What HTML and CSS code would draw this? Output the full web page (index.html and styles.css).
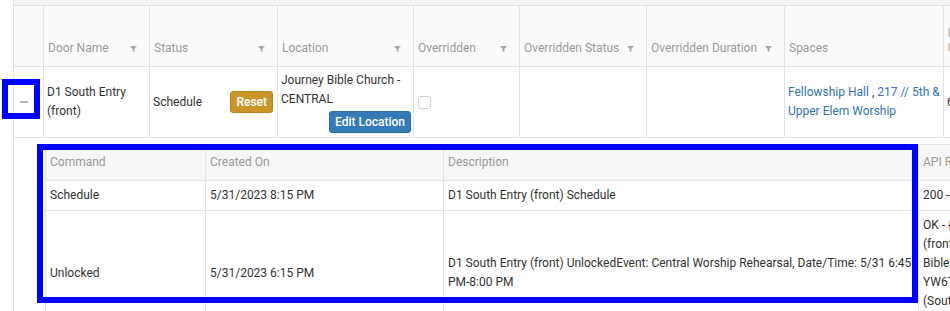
FILE: index.html
```html
<!DOCTYPE html>
<html lang="en">
<head>
  <meta charset="UTF-8">
  <meta name="viewport" content="width=device-width, initial-scale=1.0">
  <title>Doors</title>
  <link rel="stylesheet" href="styles.css">
</head>
<body>
<div class="page">
  <div class="grid">
    <div class="grid-top"></div>
    <table class="main">
      <colgroup>
        <col style="width:30px">
        <col style="width:106px">
        <col style="width:128px">
        <col style="width:136px">
        <col style="width:106px">
        <col style="width:127px">
        <col style="width:138px">
        <col style="width:159px">
        <col style="width:70px">
      </colgroup>
      <thead>
        <tr>
          <th class="hier"></th>
          <th><div class="th-in"><span>Door Name</span><svg class="filter" viewBox="0 0 8 8"><path d="M0 1h8L5 4.5V8L3 7V4.5z"/></svg></div></th>
          <th><div class="th-in"><span>Status</span><svg class="filter" viewBox="0 0 8 8"><path d="M0 1h8L5 4.5V8L3 7V4.5z"/></svg></div></th>
          <th><div class="th-in"><span>Location</span><svg class="filter" viewBox="0 0 8 8"><path d="M0 1h8L5 4.5V8L3 7V4.5z"/></svg></div></th>
          <th><div class="th-in"><span>Overridden</span><svg class="filter" viewBox="0 0 8 8"><path d="M0 1h8L5 4.5V8L3 7V4.5z"/></svg></div></th>
          <th><div class="th-in"><span>Overridden Status</span><svg class="filter" viewBox="0 0 8 8"><path d="M0 1h8L5 4.5V8L3 7V4.5z"/></svg></div></th>
          <th><div class="th-in"><span>Overridden Duration</span><svg class="filter" viewBox="0 0 8 8"><path d="M0 1h8L5 4.5V8L3 7V4.5z"/></svg></div></th>
          <th><div class="th-in"><span>Spaces</span></div></th>
          <th class="th-last"><div class="th-in"><span>Expires Until</span></div></th>
        </tr>
      </thead>
      <tbody>
        <tr class="master">
          <td class="hier"><span class="collapse"></span></td>
          <td>D1 South Entry (front)</td>
          <td>
            <div class="status">
              <span>Schedule</span>
              <a href="#" class="btn btn-reset">Reset</a>
            </div>
          </td>
          <td>
            Journey Bible Church - CENTRAL
            <div class="loc-actions"><a href="#" class="btn btn-edit">Edit Location</a></div>
          </td>
          <td><span class="check"></span></td>
          <td></td>
          <td></td>
          <td><a href="#" class="link">Fellowship Hall</a> , <a href="#" class="link">217 // 5th &amp; Upper Elem Worship</a></td>
          <td class="nowrap">6/1/2023</td>
        </tr>
        <tr class="detail">
          <td class="hier"></td>
          <td class="detail-cell" colspan="8">
            <table class="sub">
              <colgroup>
                <col style="width:160px">
                <col style="width:238px">
                <col style="width:475px">
                <col style="width:120px">
              </colgroup>
              <thead>
                <tr>
                  <th>Command</th>
                  <th>Created On</th>
                  <th>Description</th>
                  <th>API Response</th>
                </tr>
              </thead>
              <tbody>
                <tr>
                  <td>Schedule</td>
                  <td>5/31/2023 8:15 PM</td>
                  <td>D1 South Entry (front) Schedule</td>
                  <td class="api">200 - OK</td>
                </tr>
                <tr>
                  <td>Unlocked</td>
                  <td>5/31/2023 6:15 PM</td>
                  <td>D1 South Entry (front) UnlockedEvent: Central Worship Rehearsal, Date/Time: 5/31 6:45 PM-8:00 PM</td>
                  <td class="api">OK - {"door":<br>(front)",<br>Bible",<br>YW6TQ2",<br>(South)",<br>"ok"}</td>
                </tr>
              </tbody>
            </table>
          </td>
        </tr>
      </tbody>
    </table>
  </div>

  <div class="mark mark-expand"></div>
  <div class="mark mark-detail"></div>
</div>
</body>
</html>
```

FILE: styles.css
```css
body {
  margin: 0;
  font-family: Roboto, "Liberation Sans", sans-serif;
  font-size: 12px;
  color: #333;
  background: white;
  overflow: hidden;
}

.page {
  position: relative;
  width: 950px;
  height: 311px;
  overflow: hidden;
}

.grid {
  margin-left: 13px;
  border-left: 1px solid #e2e2e2;
}

.grid-top {
  height: 5px;
  background-color: #f3f3f3;
  border-bottom: 1px solid #e2e2e2;
}

table {
  border-collapse: separate;
  border-spacing: 0;
  table-layout: fixed;
}

.main {
  width: 1000px;
}

.main th {
  background-color: #fafafa;
  color: #9a9a9a;
  font-weight: normal;
  text-align: left;
  vertical-align: bottom;
  line-height: 15px;
  padding: 20px 4px 10px 4px;
  border-right: 1px solid #e4e4e4;
  border-bottom: 1px solid #e4e4e4;
}

.th-in {
  display: flex;
  justify-content: space-between;
  align-items: center;
}

.filter {
  width: 7px;
  height: 7px;
  margin-right: 8px;
  flex-shrink: 0;
  fill: #a8a8a8;
}

.main td {
  line-height: 19px;
  padding: 4px 3px;
  vertical-align: middle;
  border-right: 1px solid #e4e4e4;
  border-bottom: 1px solid #e4e4e4;
}

.main td.hier {
  padding: 0 0 0 6px;
}

.main td.nowrap {
  white-space: nowrap;
  overflow: hidden;
}

.collapse {
  display: inline-block;
  width: 8px;
  height: 2px;
  background-color: #b5b5b5;
  vertical-align: middle;
}

.status {
  display: flex;
  justify-content: space-between;
  align-items: center;
}

.btn {
  display: inline-block;
  color: white;
  text-decoration: none;
  font-weight: 500;
  font-size: 12px;
  line-height: 20px;
  padding: 0 5px;
  border-radius: 3px;
}

.btn-reset {
  background-color: #c9952b;
  border: 1px solid #b9861f;
  margin-right: 1px;
}

.btn-edit {
  background-color: #337ab7;
  border: 1px solid #2e6da4;
}

.loc-actions {
  text-align: right;
  margin-top: 2px;
  margin-right: -1px;
}

.check {
  display: inline-block;
  width: 11px;
  height: 11px;
  border: 1px solid #cfcfcf;
  border-radius: 3px;
  background: white;
  vertical-align: middle;
  margin-left: 1px;
}

.link {
  color: #3473b3;
  text-decoration: none;
}

/* detail row */
.main tr.detail td.hier {
  border-right: none;
  border-bottom: none;
}

.main td.detail-cell {
  padding: 6px 0 0 1px;
  vertical-align: top;
  border-right: none;
  border-bottom: none;
}

.sub {
  width: 994px;
  border-top: 1px solid #e4e4e4;
  border-left: 1px solid #e4e4e4;
}

.sub th {
  background-color: #f6f6f6;
  color: #9a9a9a;
  font-weight: normal;
  text-align: left;
  line-height: 19px;
  padding: 8px 4px;
  border-right: 1px solid #e4e4e4;
  border-bottom: 1px solid #e4e4e4;
}

.sub td {
  line-height: 19px;
  padding: 5px 4px;
  vertical-align: middle;
  border-right: 1px solid #e4e4e4;
  border-bottom: 1px solid #e4e4e4;
}

.sub td.api {
  white-space: nowrap;
  overflow: hidden;
}

/* annotation boxes drawn over the grid */
.mark {
  position: absolute;
  box-sizing: border-box;
  border: 6px solid #0000ff;
}

.mark-expand {
  left: 2px;
  top: 79px;
  width: 38px;
  height: 40px;
}

.mark-detail {
  left: 37px;
  top: 144px;
  width: 881px;
  height: 159px;
}
```
